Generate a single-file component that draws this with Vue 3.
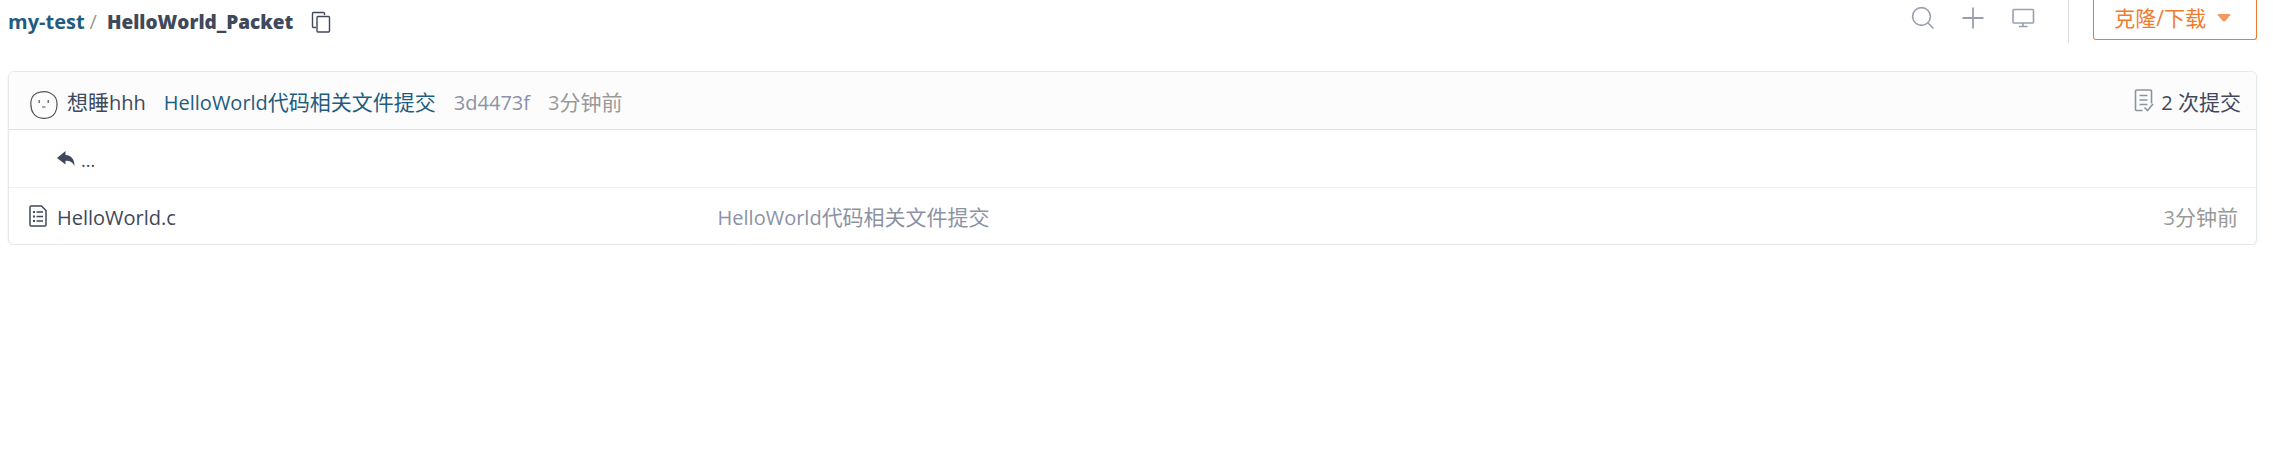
<script setup>
const commit = {
  author: '想睡',
  authorLatin: 'hhh',
  latin: 'HelloWorld',
  cjk: '代码相关文件提交',
  hash: '3d4473f',
}
</script>

<template>
  <main class="page">
    <header class="top">
      <nav class="crumbs" aria-label="路径">
        <a class="root" href="#">my-test</a>
        <span class="slash">/</span>
        <strong class="current">HelloWorld_Packet</strong>
        <button class="icon-btn copy" type="button" aria-label="复制路径">
          <svg width="20" height="22" viewBox="0 0 20 22" fill="none" stroke="currentColor" stroke-width="1.4">
            <path d="M5 16.500H2.500Q1.500 16.500 1.500 15.500V2.500Q1.500 1.500 2.500 1.500H12.500Q13.500 1.500 13.500 2.500V4" />
            <rect x="6" y="5.500" width="12.500" height="15.500" rx="1" />
          </svg>
        </button>
      </nav>
      <div class="tools">
        <button class="icon-btn" type="button" aria-label="搜索">
          <svg width="24" height="24" viewBox="0 0 24 24" fill="none" stroke="currentColor" stroke-width="1.600">
            <circle cx="10.500" cy="10.500" r="8.900" />
            <path d="M17 17L22.500 22.500" />
          </svg>
        </button>
        <button class="icon-btn" type="button" aria-label="新建">
          <svg width="24" height="24" viewBox="0 0 24 24" fill="none" stroke="currentColor" stroke-width="1.800">
            <path d="M1.500 12H22.500M12 1.500V22.500" />
          </svg>
        </button>
        <button class="icon-btn" type="button" aria-label="在线编辑">
          <svg width="24" height="24" viewBox="0 0 24 24" fill="none" stroke="currentColor" stroke-width="1.600">
            <rect x="2" y="3.500" width="20.500" height="13.500" rx="1" />
            <path d="M12 17V20M8 20.500H16.500" />
          </svg>
        </button>
        <span class="divider"></span>
        <button class="clone" type="button">
          <span>克隆<span>/</span>下载</span>
          <svg width="14" height="8" viewBox="0 0 14 8" fill="currentColor"><path d="M1.500 0H12.500Q14 .300 13 1.500L8.500 6.700Q7 8.200 5.500 6.700L1 1.500Q0 .300 1.500 0Z" /></svg>
        </button>
      </div>
    </header>

    <section class="box">
      <div class="commit">
        <svg class="face" width="28" height="28" viewBox="0 0 28 28" fill="none" stroke="#555" stroke-width="1.200">
          <path d="M10 1.200C13 .500 17 .700 19.500 1.700C23.500 3.500 26.200 6.500 26.700 10C27.300 14 27 18.500 25 22C22.500 26 18.500 27.400 14.500 27.400C10 27.500 6 26 3.500 22.500C1 19 .600 14 1 10C1.700 5.500 5 2.200 10 1.200Z" />
          <path d="M9.200 9V12M18.200 9V12M12 16H15.500" />
        </svg>
        <a class="author" href="#">{{ commit.author }}<span class="latin">{{ commit.authorLatin }}</span></a>
        <a class="message" href="#"><span class="latin">{{ commit.latin }}</span>{{ commit.cjk }}</a>
        <a class="hash latin" href="#">{{ commit.hash }}</a>
        <span class="time"><span class="latin">3</span>分钟前</span>
        <a class="count" href="#">
          <svg width="20" height="23" viewBox="0 0 20 23" fill="none" stroke="#8c92a4" stroke-width="1.600">
            <path d="M8.500 21.500H2.500Q1.500 21.500 1.500 20.500V2Q1.500 1 2.500 1H16.500Q17.500 1 17.500 2V14.500M5.500 6.500H13.500M5.500 11H13.500M5.500 15.500H13.500M10.500 18.500L13.500 21.500L19 15" />
          </svg>
          <span><span class="latin">2 </span>次提交</span>
        </a>
      </div>

      <table class="files" aria-label="文件列表">
        <colgroup>
          <col class="col-name" />
          <col />
          <col class="col-when" />
        </colgroup>
        <tbody>
          <tr>
            <td class="name" colspan="3">
              <a class="file up" href="#" aria-label="上级目录">
                <svg width="18" height="15" viewBox="0 0 18 15" fill="currentColor"><path d="M0 7L8.500 0V4C14 4.300 17.500 8 17.500 15C15.500 11 13 9.700 8.500 9.700V13.500Z" /></svg>
                <span class="dots">...</span>
              </a>
            </td>
          </tr>
          <tr>
            <td class="name">
              <a class="file" href="#">
                <svg width="18" height="22" viewBox="0 0 18 22" fill="none" stroke="currentColor" stroke-width="1.500">
                  <path d="M2 1H12.500L17 5.500V20Q17 21 16 21H2Q1 21 1 20V2Q1 1 2 1ZM7.500 7H14M7.500 11.500H14M7.500 16H14" />
                  <path d="M4 7H6M4 11.500H6M4 16H6" stroke-width="2.200" />
                </svg>
                <span class="latin">HelloWorld.c</span>
              </a>
            </td>
            <td class="note"><a href="#"><span class="latin">{{ commit.latin }}</span>{{ commit.cjk }}</a></td>
            <td class="when"><span class="latin">3</span>分钟前</td>
          </tr>
        </tbody>
      </table>
    </section>
  </main>
</template>

<style>
body {
  background: #fff;
}
</style>

<style scoped>
.page {
  padding: 0 16px 0 8px;
  font-family: "Open Sans", "Noto Sans CJK SC", sans-serif;
  font-size: 21px;
  font-weight: 400;
  line-height: 32px;
  color: #40485b;
}
a {
  color: inherit;
  text-decoration: none;
}
svg {
  display: block;
  flex: none;
}
button {
  font: inherit;
  cursor: pointer;
}
.latin {
  font-size: 20px;
}
.top {
  display: flex;
  justify-content: space-between;
  align-items: flex-start;
  height: 71px;
}
.crumbs {
  display: flex;
  align-items: center;
  height: 43px;
  font-size: 20px;
  font-weight: 700;
}
.current {
  font-size: 19px;
}
.root {
  color: #1f5c80;
}
.slash {
  margin: 0 10px 0 5px;
  font-weight: 400;
  color: #999;
}
.icon-btn {
  padding: 0;
  border: 0;
  background: none;
  color: #9a9eb0;
}
.copy {
  margin-left: 18px;
  color: #40485b;
}
.tools {
  display: flex;
  align-items: flex-start;
}
.tools .icon-btn {
  margin: 6px 26px 0 0;
}
.divider {
  width: 1px;
  height: 43px;
  margin: 0 24px 0 7px;
  background: #dcdde3;
}
.clone {
  display: flex;
  align-items: center;
  gap: 11px;
  height: 40px;
  padding: 0 25px 4px 20px;
  border: 1px solid #ee7c30;
  border-top: 0;
  border-radius: 0 0 3px 3px;
  background: #fff;
  color: #ee7c30;
}
.clone svg {
  color: #f29a5e;
}
.box {
  border: 1px solid #e3e9ed;
  border-radius: 6px;
  box-shadow: 0 1px 2px #e3e9ed;
  overflow: hidden;
}
.commit {
  display: flex;
  align-items: center;
  height: 57px;
  padding: 0 15px 0 21px;
  border-bottom: 1px solid #dfe1e3;
  background: #fcfcfc;
}
.face {
  margin-top: 8px;
}
.author {
  margin: 4px 18px 0 9px;
}
.message {
  margin: 4px 18px 0 0;
  color: #1f5c80;
}
.hash {
  margin: 4px 18px 0 0;
  color: #8c92a4;
}
.time {
  margin-top: 4px;
  color: #999;
}
.count {
  display: flex;
  align-items: center;
  gap: 7px;
  margin: 4px 0 0 auto;
}
.count svg {
  margin-bottom: 4px;
}
.files {
  width: 100%;
  border-collapse: collapse;
  table-layout: fixed;
}
.col-name {
  width: 31%;
}
.col-when {
  width: 20%;
}
td {
  height: 57px;
  padding: 4px 0 0;
  box-sizing: border-box;
}
tr + tr td {
  border-top: 1px solid #f0f1f2;
}
td.name {
  padding-left: 20px;
}
.file {
  display: flex;
  align-items: center;
  gap: 10px;
}
.file svg {
  margin-bottom: 4px;
}
.up {
  gap: 6px;
  padding-left: 28px;
}
.dots {
  font-size: 18px;
}
td.note {
  padding-left: 12px;
  color: #8c92a4;
}
td.when {
  padding-right: 18px;
  text-align: right;
  color: #999;
}
</style>
